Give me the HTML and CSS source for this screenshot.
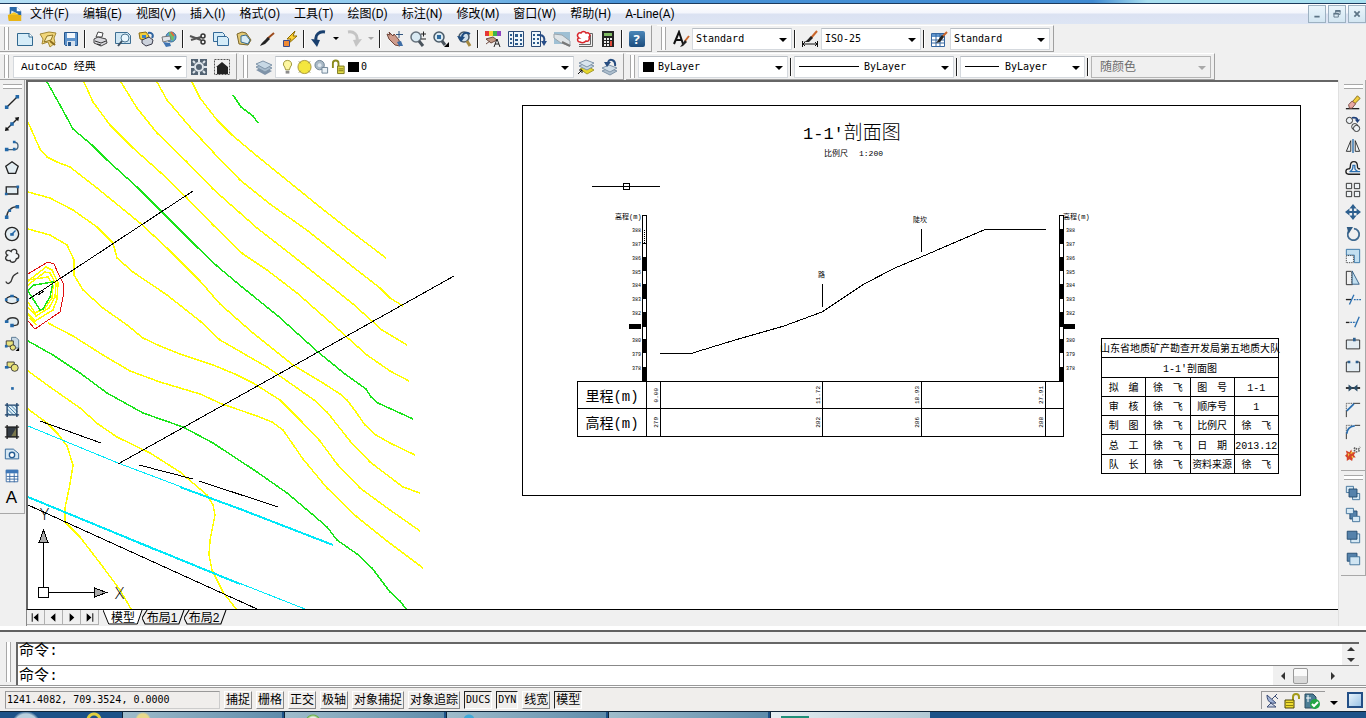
FILE: index.html
```html
<!DOCTYPE html>
<html lang="zh-CN">
<head>
  <meta charset="UTF-8">
  <meta name="viewport" content="width=device-width, initial-scale=1.0">
  <title>AutoCAD 经典</title>
  <link rel="stylesheet" href="styles.css">
</head>
<body>

  <div class="title-edge"></div>

  <header class="menubar">
    <svg class="app-icon" viewBox="0 0 18 18"><path d="M3 1h8l5 5v5H3z" fill="#2b6aa8"/><path d="M5 5l8 4-9 3z" fill="#dce9f5"/><path d="M1 10l7-3 7 4v5H2z" fill="#f3c623"/><path d="M1 10h15v7H2z" fill="#e8b416"/><path d="M11 1l5 5h-5z" fill="#fff"/></svg>
    <nav>
      <a href="#">文件(F)</a>
      <a href="#">编辑(E)</a>
      <a href="#">视图(V)</a>
      <a href="#">插入(I)</a>
      <a href="#">格式(O)</a>
      <a href="#">工具(T)</a>
      <a href="#">绘图(D)</a>
      <a href="#">标注(N)</a>
      <a href="#">修改(M)</a>
      <a href="#">窗口(W)</a>
      <a href="#">帮助(H)</a>
      <a href="#">A-Line(A)</a>
    </nav>
    <div class="window-buttons">
      <button aria-label="最小化"><svg viewBox="0 0 16 16"><path d="M5 11h6" stroke="#5d7486" stroke-width="2"/></svg></button>
      <button aria-label="还原"><svg viewBox="0 0 16 16"><path d="M6.500 7V4.500h5v4H10M4.500 7.500h5v4h-5z" fill="none" stroke="#5d7486"/><path d="M6 4.500h6M4 7.500h6" stroke="#5d7486" stroke-width="2"/></svg></button>
      <button aria-label="关闭"><svg viewBox="0 0 16 16"><path d="M5 5l6 6M11 5l-6 6" stroke="#5d7486" stroke-width="2"/></svg></button>
    </div>
  </header>

  <div class="toolbar-row">
    <div class="toolbar standard">
      <i class="grip"></i>
      <button aria-label="新建"><svg viewBox="0 0 18 18"><path d="M1.500 3.500h12l3 3v9h-15z" fill="#d5ecf8" stroke="#31688f"/><path d="M13 3v4h4" fill="#fff" stroke="#31688f"/></svg></button>
      <button aria-label="打开"><svg viewBox="0 0 18 18"><path d="M1 4l9-2 7 1-2 5 1 5-5 4-2-5-6 2 1-5z" fill="#f1d67a" stroke="#a58a35"/><path d="M5 12l3-6 6-1-2 5z" fill="#f9eebb" stroke="#8d7425"/><path d="M11 11l5 4" stroke="#8d6d1c" stroke-width="2"/></svg></button>
      <button aria-label="保存"><svg viewBox="0 0 18 18"><path d="M2.500 2.500h13v13h-12l-1-1z" fill="#5f94cc" stroke="#24558c"/><path d="M5 3h8v5H5z" fill="#f4f8fc"/><path d="M5 11h8v5H5z" fill="#d7e2ee"/><path d="M6 12h3v4H6z" fill="#24558c"/></svg></button>
      <i class="sep"></i>
      <button aria-label="打印"><svg viewBox="0 0 18 18"><path d="M5 7l2-5 5 1-1 4z" fill="#fff" stroke="#444"/><path d="M3 9l4-2 8 2 1 4-6 3-7-3z" fill="#d9d9de" stroke="#444"/><path d="M4 11l6 2 5-2M6 14l4 1" stroke="#333" fill="none"/></svg></button>
      <button aria-label="打印预览"><svg viewBox="0 0 18 18"><path d="M1.500 2.500h12l3 3v8h-15z" fill="#cfe6f3" stroke="#3d6e92"/><circle cx="11" cy="8" r="4" fill="#e9f6fd" stroke="#4d7794"/><path d="M8 11l-4 5" stroke="#3a4e60" stroke-width="2"/></svg></button>
      <button aria-label="发布"><svg viewBox="0 0 18 18"><path d="M2 3l7-1 3 4-2 5-7-2z" fill="#f3cf3a" stroke="#8c6d12"/><path d="M5 10l7-3 4 3-1 4-6 2-4-3z" fill="#ccd2dc" stroke="#3b3b4a"/><path d="M11 3c4-1 6 2 4 5" fill="none" stroke="#2f64a0" stroke-width="2"/><path d="M5 5h4v3H5z" fill="#3d7fc0"/></svg></button>
      <button aria-label="三维 DWF"><svg viewBox="0 0 18 18"><circle cx="11" cy="7" r="5" fill="#5aa7d8" stroke="#3c6a90"/><path d="M9 2c4 0 6 5 4 9-3-2-4-5-4-9z" fill="#6fbf62"/><path d="M2 7l8-1 1 4-8 2z" fill="#e1e4ea" stroke="#777"/><path d="M3 12l7 1 1 3-5 1z" fill="#3f74b2"/><path d="M11 2l3 4" stroke="#e06b3a" stroke-width="2"/></svg></button>
      <i class="sep"></i>
      <button aria-label="剪切"><svg viewBox="0 0 18 18"><path d="M1 6l11 4M2 10l10-3" stroke="#555" stroke-width="2"/><circle cx="14" cy="6" r="2" fill="none" stroke="#333" stroke-width="1.500"/><circle cx="14" cy="12" r="2" fill="none" stroke="#333" stroke-width="1.500"/></svg></button>
      <button aria-label="复制"><svg viewBox="0 0 18 18"><path d="M1.500 2.500h9l2 2v7h-11z" fill="#d5ecf8" stroke="#356a98"/><path d="M5.500 6.500h9l2 2v7h-11z" fill="#d5ecf8" stroke="#356a98"/></svg></button>
      <button aria-label="粘贴"><svg viewBox="0 0 18 18"><path d="M2 4l5-2 4 1 5 7-3 5-9-1z" fill="#e3c974" stroke="#7b6628"/><path d="M6 6l5-1 4 5-2 4-7-2z" fill="#d7ecf7" stroke="#346a92"/></svg></button>
      <button aria-label="特性匹配"><svg viewBox="0 0 18 18"><path d="M16 3l-7 6" stroke="#9c4a1c" stroke-width="2"/><path d="M10 7l2 2-5 5-5 2c1-3 4-5 8-9z" fill="#222"/></svg></button>
      <button aria-label="块编辑器"><svg viewBox="0 0 18 18"><path d="M14 1L6 9h4l-3 5 9-8h-4z" fill="#ffd334" stroke="#8e6a00"/><path d="M2.500 10.500h6v6h-6z" fill="#f08a34" stroke="#3a4a8b"/></svg></button>
      <i class="sep"></i>
      <button aria-label="放弃"><svg viewBox="0 0 18 18"><path d="M15 2C9 1 5 5 6 10" fill="none" stroke="#193f6e" stroke-width="3"/><path d="M1 9l9 1-3 7z" fill="#193f6e"/></svg></button>
      <button class="drop" aria-label="放弃列表"></button>
      <button aria-label="重做"><svg viewBox="0 0 18 18"><path d="M3 2c6-1 10 3 9 8" fill="none" stroke="#c4c4c4" stroke-width="3"/><path d="M8 10l9-1-6 8z" fill="#c4c4c4"/></svg></button>
      <button class="drop dim" aria-label="重做列表"></button>
      <i class="sep"></i>
      <button aria-label="平移"><svg viewBox="0 0 18 18"><path d="M1 4l3 1-1-3 4 4 1-2 5 6 1 6-5-1-6-6z" fill="#cf9c8c" stroke="#70463c"/><path d="M11 12l4-1 2 5h-4z" fill="#3f6ea6"/><path d="M13 1v7M10 4.500h7" stroke="#31567f"/></svg></button>
      <button aria-label="实时缩放"><svg viewBox="0 0 18 18"><circle cx="7" cy="7" r="5" fill="#d9e9f2" stroke="#65717b" stroke-width="1.500"/><path d="M10 11l4 5" stroke="#49535c" stroke-width="3"/><path d="M12 4h5M14.500 1.500v5M12 9h5" stroke="#222"/></svg></button>
      <button aria-label="窗口缩放"><svg viewBox="0 0 18 18"><circle cx="7" cy="7" r="5" fill="#d9e9f2" stroke="#4b5b68" stroke-width="1.500"/><path d="M5 5h4v4H5z" fill="#2e6b9f"/><path d="M10 11l3 4" stroke="#49535c" stroke-width="3"/><path d="M17 12v5h-5z"/></svg></button>
      <button aria-label="缩放上一个"><svg viewBox="0 0 18 18"><circle cx="9" cy="7" r="5" fill="#cfe0ec" stroke="#4b5b68" stroke-width="1.500"/><path d="M15 4C10 1 7 4 7 8" fill="none" stroke="#1f4c80" stroke-width="2"/><path d="M2 6l8 1-4 5z" fill="#1f4c80"/><path d="M12 11l3 5" stroke="#a5893f" stroke-width="3"/></svg></button>
      <i class="sep"></i>
      <button aria-label="特性"><svg viewBox="0 0 18 18"><path d="M1 1h5v5H1z" fill="#e53535"/><path d="M5 1h4v5H5z" fill="#f2d82e"/><path d="M9 1h4v5H9z" fill="#3db34a"/><path d="M13 1h4v5h-4z" fill="#8e44c0"/><path d="M2 9l7-2 4 3-6 3zM2 14l4-3" fill="#c39984" stroke="#6d493e"/><path d="M10 17l3-8 3 8M11 14h4" fill="none" stroke="#222"/></svg></button>
      <button aria-label="设计中心"><svg viewBox="0 0 18 18"><path d="M1.500 1.500h15v15h-15z" fill="#eef6fb" stroke="#2b4b77"/><path d="M6.500 2v14" stroke="#2b4b77"/><path d="M3 4h2v2H3zM3 8h2v2H3zM3 12h2v2H3zM8 4h3v3H8zM13 4h2v3h-2zM8 9h3v2H8zM13 9h2v2h-2zM8 13h3v2H8zM13 13h2v2h-2z" fill="#2b5a8c"/></svg></button>
      <button aria-label="工具选项板"><svg viewBox="0 0 18 18"><path d="M1.500 1.500h9v15h-9z" fill="#eef6fb" stroke="#2b4b77"/><path d="M3 4h2v2H3zM7 4h2v2H7zM3 8h2v2H3zM7 8h2v2H7zM3 12h2v2H3zM7 12h2v2H7z" fill="#2b5a8c"/><path d="M9 5c5 0 6 3 5 7" fill="none" stroke="#274d87" stroke-width="2"/><path d="M11 11h6l-3 5z" fill="#274d87"/></svg></button>
      <button aria-label="图纸集"><svg viewBox="0 0 18 18"><path d="M1 2h16v12H1z" fill="#9fc0d4"/><path d="M1 4l8 1 8 6v5l-9-3-7-5z" fill="#dfe4e7" stroke="#9aa4ab"/><path d="M9 12l8 4" stroke="#777" stroke-width="2"/></svg></button>
      <button aria-label="标记集"><svg viewBox="0 0 18 18"><path d="M14 3.500h2.500v13H3" fill="none" stroke="#666"/><path d="M13 5h1.500v9.500H3" fill="none" stroke="#666"/><path d="M4 12c-3 0-3-4-1-4-3-2-1-6 2-5 1-2 4-2 5 0 3-1 5 2 3 4 1 3-1 5-3 4-2 2-4 2-6 1z" fill="#fff" stroke="#d8252b" stroke-width="1.500"/></svg></button>
      <button aria-label="计算器"><svg viewBox="0 0 18 18"><path d="M3 1h12v16H3z" fill="#222"/><path d="M5 3h8v3H5z" fill="#7fba63"/><path d="M5 8h2v2H5zM8 8h2v2H8zM11 8h2v2h-2zM5 11h2v2H5zM8 11h2v2H8zM5 14h2v2H5zM8 14h2v2H8z" fill="#eee"/><path d="M11 11h2v5h-2z" fill="#e04b3a"/></svg></button>
      <i class="sep"></i>
      <button class="help" aria-label="帮助"><b>?</b></button>
    </div>
    <div class="toolbar styles">
      <i class="grip"></i>
      <button aria-label="文字样式"><svg viewBox="0 0 18 18"><path d="M2 14L7 2l4 12M4 10h6" fill="none" stroke="#111" stroke-width="2"/><path d="M17 6l-4 5" stroke="#c9652a" stroke-width="2"/><path d="M13 10l2 2-4 4-3 1z" fill="#222"/></svg></button>
      <label class="combo w-style"><select aria-label="文字样式"><option>Standard</option></select></label>
      <i class="sep"></i>
      <button aria-label="标注样式"><svg viewBox="0 0 18 18"><path d="M1.500 11v6M16.500 11v6M2 14h14M4 12l-2 2 2 2M14 12l2 2-2 2" fill="none" stroke="#111"/><path d="M16 1l-6 7" stroke="#c9652a" stroke-width="2"/><path d="M10 6l2 2-4 4H2c3 0 5-3 8-6z" fill="#222"/></svg></button>
      <label class="combo w-style"><select aria-label="标注样式"><option>ISO-25</option></select></label>
      <i class="sep"></i>
      <button aria-label="表格样式"><svg viewBox="0 0 18 18"><path d="M1.500 3.500h13v13h-13z" fill="#fff" stroke="#3566a0"/><path d="M2 4h12v3H2z" fill="#5f94cc"/><path d="M2 10h12M2 13h12M6 4v12M10 4v12" stroke="#3566a0"/><path d="M17 2l-5 5" stroke="#c9652a" stroke-width="2"/><path d="M12 5l2 2-4 5-4 1c2-2 3-5 6-8z" fill="#222"/></svg></button>
      <label class="combo w-style"><select aria-label="表格样式"><option>Standard</option></select></label>
    </div>
  </div>

  <div class="toolbar-row">
    <div class="toolbar workspaces">
      <i class="grip"></i>
      <label class="combo w-space"><select aria-label="工作空间"><option>AutoCAD 经典</option></select></label>
      <button aria-label="工作空间设置"><svg viewBox="0 0 18 18"><path d="M1 1h16v16H1z" fill="#536373"/><path d="M3 3l2 2M15 3l-2 2M3 15l2-2M15 15l-2-2M9 1v3M9 14v3M1 9h3M14 9h3" stroke="#dfe6ec" stroke-width="2"/><circle cx="9" cy="9" r="4" fill="none" stroke="#dfe6ec" stroke-width="2"/></svg></button>
      <button aria-label="我的工作空间"><svg viewBox="0 0 18 18"><path d="M1.500 1.500h15v15h-15z" fill="none" stroke="#555" stroke-dasharray="2 1"/><path d="M3 9l6-5 6 5v7H4V9z" fill="#222"/></svg></button>
    </div>
    <div class="toolbar layers">
      <i class="grip"></i>
      <button aria-label="图层特性"><svg viewBox="0 0 18 18"><path d="M1 12l7-3 9 4-7 4z" fill="#7f93a8"/><path d="M1 9l7-3 9 4-7 4z" fill="#a8bccd" stroke="#8095a9"/><path d="M1 6l7-3 9 4-7 4z" fill="#c7d8e5" stroke="#8095a9"/></svg></button>
      <div class="combo w-layer">
        <span class="overlay">
          <svg viewBox="0 0 16 16"><path d="M8 1a4 4 0 0 1 3 7l-1 3H6L5 8a4 4 0 0 1 3-7z" fill="#fdf6a0" stroke="#9b9233"/><path d="M6 12h4v3H6z" fill="#8c8c8c"/></svg>
          <svg viewBox="0 0 16 16"><circle cx="8" cy="8" r="7" fill="#f4e63e" stroke="#a8963a"/><path d="M2 2l2 2M14 2l-2 2M2 14l2-2M14 14l-2-2" stroke="#8a8a4a"/></svg>
          <svg viewBox="0 0 16 16"><circle cx="6" cy="6" r="5" fill="#a9b9c6" stroke="#6d8294"/><circle cx="6" cy="6" r="2" fill="#dfe8ef"/><path d="M8.500 8.500h6v6h-6z" fill="#e9f1f6" stroke="#6d8294"/></svg>
          <svg viewBox="0 0 16 16"><path d="M2 9V4c0-4 6-4 6 0v4" fill="none" stroke="#8a8a1d" stroke-width="2"/><path d="M7 7h7v8H7z" fill="#e1db47" stroke="#77731a"/><path d="M8 10h5M8 12h5" stroke="#77731a"/></svg>
          <i class="swatch"></i>
        </span>
        <select class="pad-layer" aria-label="图层"><option>0</option></select>
      </div>
      <button aria-label="置为当前"><svg viewBox="0 0 18 18"><path d="M3 11l7-3 7 4-7 4z" fill="#e6d72c" stroke="#a59b2c"/><path d="M2 8l7-3 8 3-7 4z" fill="#c7d8e5" stroke="#8095a9"/><path d="M2 5l7-3 8 3-7 4z" fill="#d9e5ee" stroke="#8095a9"/><path d="M1 16l4-4M2 12h3v3" fill="none" stroke="#111"/></svg></button>
      <button aria-label="上一个图层"><svg viewBox="0 0 18 18"><path d="M2 13l7-3 8 3-7 4z" fill="#aebfce" stroke="#8095a9"/><path d="M2 10l7-3 8 3-7 4z" fill="#d0dde7" stroke="#8095a9"/><path d="M15 8c1-6-5-8-7-4" fill="none" stroke="#274d80" stroke-width="2"/><path d="M4 4h7l-4 5z" fill="#274d80"/></svg></button>
    </div>
    <div class="toolbar properties">
      <i class="grip"></i>
      <div class="combo w-color">
        <span class="overlay"><i class="swatch"></i></span>
        <select class="pad-color" aria-label="颜色"><option>ByLayer</option></select>
      </div>
      <i class="sep"></i>
      <div class="combo w-ltype">
        <span class="overlay"><i class="rule long"></i></span>
        <select class="pad-ltype" aria-label="线型"><option>ByLayer</option></select>
      </div>
      <i class="sep"></i>
      <div class="combo w-lweight">
        <span class="overlay"><i class="rule"></i></span>
        <select class="pad-lweight" aria-label="线宽"><option>ByLayer</option></select>
      </div>
      <i class="sep"></i>
      <label class="combo w-plot off"><select aria-label="打印样式" disabled><option>随颜色</option></select></label>
    </div>
  </div>

  <main class="workspace">
    <aside class="dock">
      <div class="toolbox">
        <i class="grip-h"></i>
        <button aria-label="直线"><svg viewBox="0 0 18 18"><path d="M3 15L15 3" stroke="#222" stroke-width="1.500"/><path d="M1 13h4v4H1zM13 1h4v4h-4z" fill="#2368a8"/></svg></button>
        <button aria-label="构造线"><svg viewBox="0 0 18 18"><path d="M3 15L15 3" stroke="#222" stroke-width="1.500"/><path d="M1 17l1-5 4 4zM17 1l-1 5-4-4z" fill="#111"/><path d="M7 7h4v4H7z" fill="#2368a8"/></svg></button>
        <button aria-label="多段线"><svg viewBox="0 0 18 18"><path d="M3 13h9c5 0 5-8 0-8" fill="none" stroke="#44617a" stroke-width="1.500"/><path d="M1 11h4v4H1zM10 11h3v3h-3zM10 3h3v3h-3z" fill="#2368a8"/></svg></button>
        <button aria-label="正多边形"><svg viewBox="0 0 18 18"><path d="M9 2l7 5-3 8H5L2 7z" fill="#e3edf2" stroke="#222" stroke-width="1.500"/></svg></button>
        <button aria-label="矩形"><svg viewBox="0 0 18 18"><path d="M2.500 5.500h13v8h-13z" fill="#e3edf2" stroke="#222" stroke-width="1.500"/><path d="M1 12h3v3H1zM14 4h3v3h-3z" fill="#2368a8"/></svg></button>
        <button aria-label="圆弧"><svg viewBox="0 0 18 18"><path d="M3 15C3 8 8 3 15 3" fill="none" stroke="#333" stroke-width="1.500"/><path d="M1 13h4v4H1zM13 1h4v4h-4zM5 6h3v3H5z" fill="#2368a8"/></svg></button>
        <button aria-label="圆"><svg viewBox="0 0 18 18"><circle cx="9" cy="9" r="7.500" fill="#e3edf2" stroke="#222" stroke-width="1.500"/><path d="M9 9l4-4" stroke="#2368a8" stroke-width="1.500"/><path d="M7 8h4v3H7z" fill="#2368a8"/></svg></button>
        <button aria-label="修订云线"><svg viewBox="0 0 18 18"><path d="M8 4C9 0 16 1 14 6c4 1 3 6 0 6-1 5-7 5-7 2-5 1-7-3-3-6-4-2-1-8 4-4z" fill="#f2f5f7" stroke="#333" stroke-width="1.500"/></svg></button>
        <button aria-label="样条曲线"><svg viewBox="0 0 18 18"><path d="M2 13c2 4 6 2 7-3S13 5 16 3" fill="none" stroke="#333" stroke-width="1.500"/></svg></button>
        <button aria-label="椭圆"><svg viewBox="0 0 18 18"><ellipse cx="9" cy="9" rx="7" ry="4" fill="#e3edf2" stroke="#222" stroke-width="1.500"/><path d="M1 7h3v3H1zM14 7h3v3h-3zM7 3h4v3H7z" fill="#2368a8"/></svg></button>
        <button aria-label="椭圆弧"><svg viewBox="0 0 18 18"><path d="M3 8c2-5 12-5 13 0s-3 5-6 5" fill="#e3edf2" stroke="#333" stroke-width="1.500"/><path d="M1 7h4v3H1zM7 11h4v4H7z" fill="#2368a8"/></svg></button>
        <button aria-label="插入块"><svg viewBox="0 0 18 18"><path d="M8.500 1.500h5l3 3v9h-8z" fill="#c8d9e6" stroke="#51718c"/><path d="M2.500 5.500h8v6h-8z" fill="#e8e27c" stroke="#333"/><circle cx="10" cy="13" r="3" fill="#e8e27c" stroke="#333"/><path d="M1 10h3v3H1z" fill="#2368a8"/><path d="M17 13v4h-4z"/></svg></button>
        <button aria-label="创建块"><svg viewBox="0 0 18 18"><path d="M3.500 4.500h8v6h-8z" fill="#e8e27c" stroke="#333"/><circle cx="12" cy="11" r="4" fill="#e8e27c" stroke="#333"/><path d="M1 9h4v3H1z" fill="#2368a8"/></svg></button>
        <button aria-label="点"><svg viewBox="0 0 18 18"><path d="M8 8h3v3H8z" fill="#2368a8"/></svg></button>
        <button aria-label="图案填充"><svg viewBox="0 0 18 18"><path d="M3 3h12v12H3z" fill="#dcecf5"/><path d="M4 4l10 10M8 4l7 7M12 4l3 3M4 8l7 7M4 12l3 3" stroke="#34729f"/><path d="M1 3.500h16M1 14.500h16M3.500 1v16M14.500 1v16" stroke="#1c4169" stroke-width="1.500"/></svg></button>
        <button aria-label="渐变色"><svg viewBox="0 0 18 18"><path d="M3 3h12v12H3z" fill="#343c45"/><path d="M8 14l6-10v10z" fill="#7a774d"/><path d="M1 3.500h16M1 14.500h16M3.500 1v16M14.500 1v16" stroke="#222" stroke-width="1.500"/></svg></button>
        <button aria-label="面域"><svg viewBox="0 0 18 18"><path d="M1.500 3.500h9l6 5v6h-15z" fill="#d5e7f3" stroke="#255c92"/><circle cx="9" cy="10" r="3" fill="#fff" stroke="#255c92" stroke-width="1.500"/></svg></button>
        <button aria-label="表格"><svg viewBox="0 0 18 18"><path d="M2.500 2.500h13v13h-13z" fill="#fff" stroke="#3566a0"/><path d="M2 2h14v4H2z" fill="#3f78b8"/><path d="M3 9.500h13M3 12.500h13M6.500 6v10M11.500 6v10" stroke="#3566a0"/></svg></button>
        <button class="mtext" aria-label="多行文字">A</button>
      </div>
    </aside>

    <section class="drawing">
      <div class="canvas">
        <svg class="plan" viewBox="28 82 1310 527">
          <g class="yellow">
            <path d="M192 82L200 98L217 120L232 135L257 156L320 207L353 233L386 258"/>
            <path d="M157 82L167 100L190 127L213 152L240 180L270 204L308 231L353 267L380 288L390 298L403 306"/>
            <path d="M121 82L137 108L157 133L187 162L213 189L257 228L293 256L333 288L353 304L382 330L407 345"/>
            <path d="M84 82L93 102L110 125L133 148L160 172L187 198L213 225L243 254L267 270L297 293L330 322L367 355L390 371L409 381"/>
            <path d="M28 122L35 138L40 149L47 157L57 162L70 167L97 188L140 223L167 248L200 281L220 304L253 333L293 365L323 383L340 394L347 400L356 412L365 425L376 435L390 443L415 455"/>
            <path d="M28 192L50 198L73 210L97 227L113 243L117 258L133 272L167 295L200 321L220 340L267 367L297 388L314 400L327 412L350 441L370 462L403 487L420 493"/>
            <path d="M28 229L50 235L67 245L74 260L74 275L83 290L103 308L127 325L143 338L160 346L180 354L213 365L235 374L253 383L280 400L302 422L320 441L337 464L360 488L390 510L420 531"/>
            <path d="M48 323L73 336L103 355L130 371L160 382L200 394L222 404L257 416L272 422L283 430L303 459L327 488L357 517L387 541L423 568"/>
            <path d="M28 371L50 387L80 408L98 424L117 437L150 453L180 472L207 495L213 505L215 515L210 540L209 555L212 570L223 592L236 609"/>
            <path d="M28 409L47 423L58 434L67 446L73 465L70 484L65 508L65 522L80 537L100 563L120 590L131 609"/>
            <path d="M28 281L46 267L52 270L58 283L57 299L53 310L35 321L28 314M28 285L45 272L50 273L56 284L55 297L49 308L36 316L28 307M28 280L48 277L53 286L52 298L45 308L35 313L28 302M36 325L30 318"/>
          </g>
          <g class="green">
            <path d="M47 82L60 105L73 129L92 145L107 160L137 187L162 212L197 247L217 266L242 287L278 316L318 352L345 374L366 389L371 397L378 403L413 419"/>
            <path d="M233 95L241 107L253 116L258 123"/>
            <path d="M28 341L53 355L80 373L107 393L143 413L163 420L183 427L213 443L257 472L287 493L312 514L327 527L337 540L357 554L372 568L390 592L400 601L406 609"/>
            <path d="M28 290L34 285L53 282L50 297L43 309L40 310L28 291"/>
          </g>
          <path class="red" d="M28 274L48 262L54 264L59 275L63 283L63 297L60 312L35 329L28 321"/>
          <path class="cyan" d="M28 426L118 463L240 509M28 497L150 548L305 609"/>
          <path class="cyan thick" d="M28 497L130 539L240 584M180 487L240 509L333 545"/>
          <path class="ink" d="M29 299L193 191M118 464L454 276M40 421L101 443M139 465L193 479M199 481L278 507M28 505L257 609M38 295l6-4"/>

          <g class="ink">
            <path d="M38.500 587.500h10v10h-10zM43.500 587V542M49 592.500h45"/>
            <path class="arrowhead" d="M39 542.500h9L43.500 530zM94.500 588v9l12-4.500z"/>
            <path d="M592 186.500h68M623.500 183.500h6v6h-6z"/>
            <path d="M522.500 105.500h778v390h-778z"/>
            <path d="M660 353.500H691L735 340L784 326L822 312L864 284L895 268L921 257L985 229.500H1046"/>
            <path d="M822.500 284v23M921.500 229v23"/>
            <path d="M642.500 215.500h4v166h-4zM1059.500 215.500h4v166h-4z"/>
            <path d="M643 243.500h4"/>
          </g>
          <path class="hatch" d="M644.500 230v13M642.500 231v13M646.500 231v13"/>
          <g class="fill">
            <path d="M642 257h5v14h-5zM642 284h5v15h-5zM642 312h5v15h-5zM642 339h5v14h-5zM642 367h5v14h-5z"/>
            <path d="M1059 229h5v15h-5zM1059 257h5v14h-5zM1059 284h5v15h-5zM1059 312h5v15h-5zM1059 339h5v14h-5zM1059 367h5v14h-5z"/>
            <path d="M629 324h12v5h-12zM1063 324h12v5h-12z"/>
          </g>

          <text class="ucs" x="40" y="520">Y</text>
          <text class="ucs" x="115" y="599">X</text>
          <text class="heading" x="803" y="139"><tspan class="latin">1-1'</tspan>剖面图</text>
          <text class="scale" x="824" y="156">比例尺</text>
          <text class="scale" x="859" y="156">1:200</text>
          <text class="tag" x="615" y="219">高程(m)</text>
          <text class="tag" x="1063" y="219">高程(m)</text>
          <text class="tag" x="818" y="277">路</text>
          <text class="tag" x="913" y="222">陡坎</text>
          <g class="level">
            <text x="632" y="232">388</text><text x="632" y="246">387</text><text x="632" y="260">386</text><text x="632" y="274">385</text><text x="632" y="287">384</text><text x="632" y="301">383</text><text x="632" y="315">382</text><text x="632" y="342">380</text><text x="632" y="356">379</text><text x="632" y="370">378</text>
            <text x="1066" y="232">388</text><text x="1066" y="246">387</text><text x="1066" y="260">386</text><text x="1066" y="274">385</text><text x="1066" y="287">384</text><text x="1066" y="301">383</text><text x="1066" y="315">382</text><text x="1066" y="342">380</text><text x="1066" y="356">379</text><text x="1066" y="370">378</text>
          </g>
        </svg>

        <table class="stations">
          <colgroup><col class="c1"><col class="c2"><col class="c3"><col class="c4"><col class="c5"><col class="c6"></colgroup>
          <tr><th>里程(m)</th><td><span>0.00</span></td><td><span>11.72</span></td><td><span>18.93</span></td><td><span>27.91</span></td><td></td></tr>
          <tr><th>高程(m)</th><td><span>279</span></td><td><span>282</span></td><td><span>286</span></td><td><span>288</span></td><td></td></tr>
        </table>

        <table class="title-block">
          <tr><td colspan="4"><span>山东省地质矿产勘查开发局第五地质大队</span></td></tr>
          <tr class="tall"><td colspan="4">1-1'剖面图</td></tr>
          <tr><td>拟　编</td><td>徐　飞</td><td>图　号</td><td>1-1</td></tr>
          <tr><td>审　核</td><td>徐　飞</td><td>顺序号</td><td>1</td></tr>
          <tr><td>制　图</td><td>徐　飞</td><td>比例尺</td><td>徐　飞</td></tr>
          <tr class="tall"><td>总　工</td><td>徐　飞</td><td>日　期</td><td>2013.12</td></tr>
          <tr><td>队　长</td><td>徐　飞</td><td>资料来源</td><td>徐　飞</td></tr>
        </table>
      </div>

      <div class="layout-tabs">
        <button class="nav-btn" aria-label="第一个"><svg viewBox="0 0 18 14"><path d="M5 3h1v9H5zM12 3v9L7 7.500z"/></svg></button>
        <button class="nav-btn" aria-label="上一个"><svg viewBox="0 0 18 14"><path d="M11 3v9L6 7.500z"/></svg></button>
        <button class="nav-btn" aria-label="下一个"><svg viewBox="0 0 18 14"><path d="M7 3v9l5-4.500z"/></svg></button>
        <button class="nav-btn" aria-label="最后一个"><svg viewBox="0 0 18 14"><path d="M12 3h1v9h-1zM6 3v9l5-4.500z"/></svg></button>
        <button class="tab active"><svg viewBox="0 0 42 15" preserveAspectRatio="none"><path d="M0 0l6 14h30l5-14"/></svg><span>模型</span></button>
        <button class="tab"><svg viewBox="0 0 42 15" preserveAspectRatio="none"><path d="M5 0L0 8l3 6h33l5-14"/></svg><span>布局1</span></button>
        <button class="tab"><svg viewBox="0 0 42 15" preserveAspectRatio="none"><path d="M5 0L0 8l3 6h33l5-14"/></svg><span>布局2</span></button>
      </div>
    </section>

    <aside class="dock right">
      <div class="toolbox">
        <i class="grip-h"></i>
        <button aria-label="删除"><svg viewBox="0 0 18 18"><path d="M1 16.500h15" stroke="#222" stroke-width="1.500"/><path d="M8 9l6-7 3 3-6 6z" fill="#f2cf3d" stroke="#7c6312"/><path d="M4 12l4-4 4 3-4 5H5z" fill="#e9a9a2" stroke="#74463f"/></svg></button>
        <button aria-label="复制对象"><svg viewBox="0 0 18 18"><circle cx="5" cy="5" r="3.500" fill="#eef2f5" stroke="#222"/><circle cx="11" cy="12" r="3.500" fill="#eef2f5" stroke="#222"/><circle cx="13" cy="14" r="3.500" fill="#eef2f5" stroke="#222"/><path d="M8 2c4-1 6 1 6 3" fill="none" stroke="#1d3f7a" stroke-width="2"/><path d="M11 4h6l-3 4z" fill="#1d3f7a"/></svg></button>
        <button aria-label="镜像"><svg viewBox="0 0 18 18"><path d="M6.500 3v12H1.500zM11.500 3v12h5z" fill="#eef2f5" stroke="#222"/><path d="M9 1v16" stroke="#2368a8" stroke-width="1.500"/></svg></button>
        <button aria-label="偏移"><svg viewBox="0 0 18 18"><path d="M17 16H4c-4 0-4-6 0-6 2 0 2-1 2-3 0-7 8-7 8 0 0 2 0 3 3 3" fill="none" stroke="#222" stroke-width="1.500"/><path d="M17 13H5M6 12c3 0 3-3 3-6h2c0 4 0 6 3 6" fill="none" stroke="#2b6fb0" stroke-width="1.500"/></svg></button>
        <button aria-label="阵列"><svg viewBox="0 0 18 18"><path d="M1.500 1.500h6v6h-6zM10.500 1.500h6v6h-6zM1.500 10.500h6v6h-6zM10.500 10.500h6v6h-6z" fill="#eef2f5" stroke="#222"/></svg></button>
        <button aria-label="移动"><svg viewBox="0 0 18 18"><path d="M9 3v12M3 9h12" stroke="#2e608f" stroke-width="2"/><path d="M9 0l4 5H5zM9 18l4-5H5zM0 9l5-4v8zM18 9l-5-4v8z" fill="#2e608f"/></svg></button>
        <button aria-label="旋转"><svg viewBox="0 0 18 18"><path d="M10 3a6.500 6.500 0 1 1-6 3" fill="none" stroke="#3f6a90" stroke-width="2"/><path d="M2 1h7L4 9z" fill="#2e5a82"/></svg></button>
        <button aria-label="缩放"><svg viewBox="0 0 18 18"><path d="M1.500 8V1.500h15v15h-6V8z" fill="#c2dff0" stroke="#2e6fa3"/><path d="M1.500 8.500h8v8h-8z" fill="#f4f8fb" stroke="#222" stroke-dasharray="1 1"/></svg></button>
        <button aria-label="拉伸"><svg viewBox="0 0 18 18"><path d="M8 1l8 15H8z" fill="#c2dff0" stroke="#2e5a82"/><path d="M7 1.500H1.500v15h7" fill="none" stroke="#222"/><path d="M7.500 2v14" stroke="#222" stroke-dasharray="1 1"/></svg></button>
        <button aria-label="修剪"><svg viewBox="0 0 18 18"><path d="M1 8.500h6" stroke="#222" stroke-width="1.500"/><path d="M10 8.500h8" stroke="#2b6fb0" stroke-width="1.500" stroke-dasharray="2 1"/><path d="M5 14l5-11" stroke="#2b6fb0" stroke-width="1.500"/></svg></button>
        <button aria-label="延伸"><svg viewBox="0 0 18 18"><path d="M1 9.500h4" stroke="#222" stroke-width="1.500"/><path d="M6 9.500h7" stroke="#2b6fb0" stroke-width="1.500" stroke-dasharray="2 1"/><path d="M11 15l5-12" stroke="#2b6fb0" stroke-width="1.500"/></svg></button>
        <button aria-label="打断于点"><svg viewBox="0 0 18 18"><path d="M1.500 4.500h15v10h-15z" fill="#e3ecf2" stroke="#222"/><path d="M9 2h3v4H9z" fill="#2e608f"/></svg></button>
        <button aria-label="打断"><svg viewBox="0 0 18 18"><path d="M4 4.500H1.500v11h15v-11H14" fill="#e3ecf2" stroke="#222"/><path d="M3 3h3v3H3zM12 3h3v3h-3z" fill="#2e608f"/></svg></button>
        <button aria-label="合并"><svg viewBox="0 0 18 18"><path d="M1 9h16" stroke="#222" stroke-width="2"/><path d="M4 5l5 4-5 4zM14 5L9 9l5 4z" fill="#2b4c66"/></svg></button>
        <button aria-label="倒角"><svg viewBox="0 0 18 18"><path d="M1.500 10V1.500H9" fill="none" stroke="#222" stroke-dasharray="1 1"/><path d="M9 1.500h8M1.500 10v7" stroke="#222"/><path d="M2 10l8-8" stroke="#2b6fb0" stroke-width="2"/></svg></button>
        <button aria-label="圆角"><svg viewBox="0 0 18 18"><path d="M1.500 10V1.500H9" fill="none" stroke="#222" stroke-dasharray="1 1"/><path d="M11 1.500h6M1.500 10v7" stroke="#222"/><path d="M2 11c0-5 4-9 9-9" fill="none" stroke="#2b6fb0" stroke-width="2"/></svg></button>
        <button aria-label="分解"><svg viewBox="0 0 18 18"><path d="M1 5l4 2 2-3 1 3 4 0-2 3 2 3-3 0-1 4-3-2-3 2 0-4-2-2 2-2z" fill="#d5452b"/><path d="M3 8l2 1-1 3zM7 6l2 2-3 1zM7 12l2-1v3z" fill="#f7cf3c"/><path d="M10 6l4-4M12 7l5-2M10 3l2-2M15 4l2-3" stroke="#555" stroke-width="1.500" stroke-dasharray="2 1"/></svg></button>
      </div>
      <div class="toolbox">
        <i class="grip-h"></i>
        <button aria-label="前置"><svg viewBox="0 0 18 18"><path d="M1.500 1.500h8v7h-8zM8.500 9.500h8v7h-8z" fill="#d8eaf5" stroke="#3c6d96"/><path d="M4.500 4.500h9v9h-9z" fill="#5582ab" stroke="#21496e"/></svg></button>
        <button aria-label="后置"><svg viewBox="0 0 18 18"><path d="M5.500 4.500h8v9h-8z" fill="#5582ab" stroke="#21496e"/><path d="M1.500 1.500h8v6h-8zM8.500 10.500h8v6h-8z" fill="#d8eaf5" stroke="#3c6d96"/></svg></button>
        <button aria-label="置于对象之上"><svg viewBox="0 0 18 18"><path d="M6.500 5.500h10v10h-10z" fill="#d8eaf5" stroke="#3c6d96"/><path d="M2.500 2.500h11v9h-11z" fill="#5582ab" stroke="#21496e"/></svg></button>
        <button aria-label="置于对象之下"><svg viewBox="0 0 18 18"><path d="M2.500 2.500h11v9h-11z" fill="#5582ab" stroke="#21496e"/><path d="M5.500 6.500h11v9h-11z" fill="#d0e5f2" stroke="#3c6d96"/></svg></button>
      </div>
    </aside>
  </main>

  <div class="splitter"></div>

  <section class="command">
    <i class="grip"></i>
    <div class="command-lines">
      <div class="history">
        <p>命令:</p>
        <div class="v-scroll"><button aria-label="向上" class="arrow up"></button><button aria-label="向下" class="arrow down"></button></div>
      </div>
      <div class="prompt">
        <label for="cmd">命令:</label>
        <input id="cmd" type="text">
        <div class="h-scroll"><button aria-label="向左" class="arrow left"></button><button aria-label="滑块" class="thumb"></button><button aria-label="向右" class="arrow next"></button></div>
      </div>
    </div>
  </section>

  <footer class="statusbar">
    <output class="coords">1241.4082, 709.3524, 0.0000</output>
    <button>捕捉</button>
    <button>栅格</button>
    <button>正交</button>
    <button>极轴</button>
    <button>对象捕捉</button>
    <button>对象追踪</button>
    <button class="on mono">DUCS</button>
    <button class="on mono">DYN</button>
    <button>线宽</button>
    <button class="on">模型</button>
    <div class="tray">
      <svg viewBox="0 0 16 16"><path d="M3 2c0 7 4 9 9 8z" fill="#9fb2d6" stroke="#3c4d75"/><path d="M8 6l5-5M11 3l3 3M7 10l-4 4h9z" fill="#ccd4e6" stroke="#3c4d75"/></svg>
      <svg viewBox="0 0 16 16"><path d="M9 7V4c0-4 6-4 6 0v2" fill="none" stroke="#a39a1a" stroke-width="2"/><path d="M1 7h9v8H1z" fill="#f0dc30" stroke="#4d4708"/><path d="M2 9.500h7M2 12.500h7" stroke="#8b8010"/></svg>
      <svg viewBox="0 0 16 16"><path d="M1 1h8l3 3v11H1z" fill="#4b7d95" stroke="#2c4c60"/><path d="M4 2v7M2 5h5" stroke="#fff"/><circle cx="11" cy="11" r="5" fill="#23a544"/><path d="M8 11l2 2 4-4" fill="none" stroke="#fff" stroke-width="2"/></svg>
    </div>
    <button class="drop" aria-label="状态栏菜单"></button>
    <button class="clean" aria-label="全屏显示"></button>
  </footer>

  <div class="taskbar">
    <span class="start"></span>
    <span class="task"></span>
    <span class="task"></span>
    <span class="task"></span>
    <span class="task"></span>
    <span class="task current"></span>
  </div>

</body>
</html>
```

FILE: styles.css
```css
* {
  box-sizing: border-box;
}

body {
  margin: 0;
  height: 100vh;
  display: flex;
  flex-direction: column;
  overflow: hidden;
  background-color: #f0f0f0;
  color: #000;
  font-family: "Open Sans", "Noto Sans CJK SC", sans-serif;
  font-size: 12px;
  line-height: 16px;
}

button {
  display: flex;
  align-items: center;
  justify-content: center;
  margin: 0;
  padding: 0;
  border: 0;
  background: none;
  color: inherit;
  font: inherit;
}

/* title bar edge and menu */
.title-edge {
  flex: none;
  height: 4px;
  background: linear-gradient(90deg, #b6e0f5, #8cc8ee 30%, #4a94d8 45%, #3f8ad2 80%, #a9e0f0 84%);
  border-bottom: 1px solid #1d3a5c;
}

.menubar {
  flex: none;
  display: flex;
  align-items: center;
  height: 20px;
  padding-left: 7px;
  background: linear-gradient(#fff, #f4f6fc 45%, #dbe2f2 50%, #dde5f4);
}

.app-icon {
  width: 16px;
  height: 16px;
  margin-right: 7px;
}

.menubar nav {
  display: flex;
  flex: 1;
  gap: 14px;
  font-family: Roboto, "Noto Sans CJK SC", sans-serif;
}

.menubar a {
  color: #000;
  text-decoration: none;
}

.window-buttons {
  display: flex;
  gap: 2px;
}

.window-buttons button {
  width: 18px;
  height: 18px;
  border: 1px solid #9db1c1;
  background: linear-gradient(#eaf5fb, #d3e6f2);
}

.window-buttons svg {
  width: 14px;
  height: 14px;
}

/* toolbars */
.toolbar-row {
  flex: none;
  display: flex;
  height: 27px;
  margin-top: 1px;
}

.toolbar {
  display: flex;
  align-items: center;
  padding: 1px 3px 1px 4px;
  border-right: 1px solid #a0a0a0;
  border-bottom: 1px solid #a0a0a0;
  border-top: 1px solid #fff;
}

.toolbar + .toolbar {
  margin-left: 2px;
}

.grip {
  flex: none;
  width: 5px;
  height: 23px;
  margin-right: 4px;
  border: solid #a8a8a8;
  border-width: 0 1px;
  background: #fff;
}

.toolbar button {
  flex: none;
  width: 23px;
  height: 22px;
}

.toolbar svg {
  width: 18px;
  height: 18px;
}

.sep {
  flex: none;
  width: 2px;
  height: 18px;
  margin: 0 2px;
  background: linear-gradient(90deg, #222 50%, #fff 50%);
}

.toolbar .drop {
  width: 12px;
}

.drop::before,
.combo::after {
  content: "";
  border: 4px solid transparent;
  border-top-color: #000;
  border-bottom-width: 0;
}

.toolbar .drop::before {
  border-width: 3px 3px 0;
}

.drop.dim::before,
.combo.off::after {
  border-top-color: #a8a8a8;
}

.help b {
  width: 16px;
  height: 16px;
  border-radius: 2px;
  background: linear-gradient(#4a86b8, #1d4d7d);
  color: #fff;
  font-size: 13px;
  line-height: 16px;
}

.combo {
  position: relative;
  height: 22px;
  border: 1px solid #d5d9de;
  border-top-color: #b9bec4;
  background: #fff;
}

.combo::after {
  position: absolute;
  right: 4px;
  top: 9px;
  pointer-events: none;
}

.combo select {
  display: block;
  width: 100%;
  height: 20px;
  padding: 0 3px;
  border: 0;
  background: transparent;
  appearance: none;
  color: #000;
  font-family: "DejaVu Sans Mono", "Noto Sans CJK SC", monospace;
  font-size: 10px;
}

.overlay {
  position: absolute;
  left: 4px;
  top: 0;
  height: 20px;
  display: flex;
  align-items: center;
  gap: 2px;
  pointer-events: none;
}

.overlay svg {
  width: 15px;
  height: 16px;
}

.swatch {
  width: 11px;
  height: 10px;
  background: #000;
}

.rule {
  width: 34px;
  height: 1px;
  background: #000;
}

.rule.long {
  width: 60px;
}

.toolbar + .styles {
  margin-left: 5px;
}

.styles .grip,
.properties .grip {
  margin-right: 3px;
}

.w-style {
  width: 100px;
}

.w-space {
  width: 174px;
}

.combo.w-space select {
  padding-left: 7px;
  font-family: "Liberation Mono", "Noto Sans CJK SC", monospace;
  font-size: 11px;
}

.w-layer {
  width: 299px;
}

.combo .pad-layer {
  padding-left: 85px;
}

.w-color {
  width: 150px;
}

.combo .pad-color {
  padding-left: 19px;
}

.w-ltype {
  width: 160px;
}

.combo .pad-ltype {
  padding-left: 69px;
}

.w-lweight {
  width: 125px;
}

.combo .pad-lweight {
  padding-left: 44px;
}

.w-plot {
  width: 120px;
}

.combo.off {
  border-color: #b5b5b5;
  background: #f0f0f0;
}

.combo.off select {
  padding-left: 8px;
  color: #6d6d6d;
  font-size: 12px;
  opacity: 1;
}

/* drawing area with docked tool columns */
.workspace {
  flex: 1;
  display: flex;
  min-height: 0;
}

.dock {
  flex: none;
  width: 26px;
}

.dock.right {
  width: 28px;
  padding-left: 2px;
  border-left: 1px solid #e0e0e0;
}

.toolbox {
  display: flex;
  flex-direction: column;
  width: 25px;
  padding-top: 4px;
  padding-bottom: 4px;
  border-right: 1px solid #a8a8a8;
  border-bottom: 1px solid #a8a8a8;
}

.right .toolbox {
  padding-bottom: 5px;
}

.grip-h {
  height: 5px;
  margin: 0 2px 2px 3px;
  border: solid #a8a8a8;
  border-width: 1px 0;
  background: #fff;
}

.toolbox button {
  width: 23px;
  height: 22px;
}

.toolbox svg {
  width: 16px;
  height: 16px;
}

.toolbox .mtext {
  font-family: "Liberation Sans", sans-serif;
  font-size: 17px;
}

.drawing {
  flex: 1;
  min-width: 0;
  display: flex;
  flex-direction: column;
}

.canvas {
  position: relative;
  flex: 1;
  min-height: 0;
  overflow: hidden;
  background: #fff;
  border: solid #666;
  border-width: 2px 0 1px 2px;
  border-bottom-color: #000;
}

.plan {
  display: block;
  width: 1310px;
  height: 527px;
  shape-rendering: crispEdges;
}

.plan path {
  fill: none;
}

.plan .yellow path {
  stroke: #ff0;
  stroke-width: 1.5;
}

.plan .green path {
  stroke: #1be41b;
  stroke-width: 1.5;
}

.plan .red {
  stroke: #e01010;
}

.plan .cyan {
  stroke: #00e8f8;
}

.plan .cyan.thick {
  stroke-width: 2;
}

.plan .ink {
  stroke: #000;
}

.plan .arrowhead {
  fill: #aaa;
}

.plan .hatch {
  stroke: #000;
  stroke-dasharray: 1 1;
}

.plan .fill path {
  fill: #000;
}

.plan text {
  font-family: "Liberation Mono", "Noto Sans CJK SC", monospace;
}

.plan .ucs {
  font-family: "Open Sans", sans-serif;
  font-size: 17px;
  font-weight: 300;
}

.plan .heading {
  font-size: 19px;
  font-weight: 300;
}

.plan .heading .latin {
  font-size: 17px;
}

.plan .scale {
  font-size: 8px;
}

.plan .tag {
  font-size: 7px;
}

.plan .level text {
  font-size: 5px;
}

.canvas table {
  position: absolute;
  border-collapse: collapse;
  table-layout: fixed;
  font-family: "Liberation Mono", "Noto Sans CJK SC", monospace;
}

.canvas th,
.canvas td {
  padding: 0;
  border: 1px solid #000;
  font-weight: 400;
  white-space: nowrap;
}

.stations {
  left: 549px;
  top: 299px;
  width: 487px;
}

.stations tr {
  height: 27px;
}

.stations tr + tr {
  height: 28px;
}

.stations .c1 { width: 69px; }
.stations .c2 { width: 14px; }
.stations .c3 { width: 162px; }
.stations .c4 { width: 99px; }
.stations .c5 { width: 124px; }
.stations .c6 { width: 18px; }

.canvas .stations th {
  padding-top: 3px;
  font-size: 14px;
  line-height: 20px;
}

.stations td {
  font-size: 6px;
  line-height: 6px;
}

.stations span {
  display: block;
  margin-left: auto;
  width: 6px;
  writing-mode: vertical-rl;
  transform: rotate(180deg);
  text-align: center;
}

.title-block {
  left: 1073px;
  top: 256px;
  width: 178px;
  text-align: center;
  font-size: 10px;
  line-height: 15px;
}

.title-block tr {
  height: 19px;
}

.title-block .tall {
  height: 20px;
}

.canvas .title-block td {
  padding-top: 3px;
}

.title-block span {
  display: block;
  margin: 0 -2px;
}

.layout-tabs {
  flex: none;
  display: flex;
  height: 16px;
  border-left: 1px solid #888;
}

.nav-btn {
  width: 18px;
  height: 15px;
  border-right: 1px solid #b0b0b0;
  border-bottom: 1px solid #b0b0b0;
}

.nav-btn svg {
  width: 18px;
  height: 14px;
}

.tab {
  position: relative;
  width: 43px;
  height: 15px;
  margin-left: -1px;
  padding-right: 3px;
  font-family: "Liberation Sans", "Noto Sans CJK SC", sans-serif;
}

.tab.active {
  margin-left: 4px;
  padding-right: 0;
  width: 40px;
}

.tab svg {
  position: absolute;
  inset: 0;
  width: 100%;
  height: 100%;
}

.tab path {
  fill: #f0f0f0;
  stroke: #000;
}

.tab.active path {
  fill: #fff;
}

.tab span {
  position: relative;
}

/* command window */
.splitter {
  flex: none;
  height: 16px;
  background: linear-gradient(#fff 4px, #606060 4px, #606060 6px, #f0f0f0 6px);
}

.command {
  flex: none;
  display: flex;
  height: 43px;
  padding: 0 7px 0 6px;
}

.command .grip {
  height: 40px;
  margin-right: 5px;
}

.command-lines {
  flex: 1;
  border-left: 2px solid #666;
  font-family: "Liberation Mono", "Noto Sans CJK SC", monospace;
  font-size: 15px;
}

.history {
  display: flex;
  justify-content: space-between;
  height: 24px;
  border-top: 2px solid #666;
  border-bottom: 1px solid #888;
  background: #fff;
}

.history p {
  margin: 0;
  padding-left: 1px;
}

.v-scroll {
  display: flex;
  flex-direction: column;
  justify-content: space-around;
  align-items: center;
  width: 17px;
  background: #f0f0f0;
}

.prompt {
  display: flex;
  height: 19px;
  margin-right: 17px;
  background: #fff;
}

.prompt label {
  padding-left: 1px;
  line-height: 21px;
}

.prompt input {
  flex: 1;
  border: 0;
  padding: 0 4px;
  font: inherit;
  outline: 0;
}

.h-scroll {
  display: flex;
  align-items: center;
  justify-content: space-between;
  width: 69px;
  padding: 0 7px 0 8px;
  background: #f0f0f0;
}

.h-scroll .thumb {
  width: 15px;
  height: 16px;
  margin-right: 16px;
  border: 1px solid #999;
  border-radius: 2px;
  background: linear-gradient(#fafafa 50%, #d9d9d9 50%);
}

.arrow {
  border: 4px solid transparent;
}

.arrow.up {
  border-top-width: 0;
  border-bottom-color: #333;
}

.arrow.down {
  border-bottom-width: 0;
  border-top-color: #333;
}

.arrow.left {
  border-left-width: 0;
  border-right-color: #333;
}

.arrow.next {
  border-right-width: 0;
  border-left-color: #333;
}

/* status bar */
.statusbar {
  flex: none;
  display: flex;
  align-items: center;
  gap: 4px;
  height: 26px;
  padding: 4px 3px 1px 5px;
  border-top: 1px solid #999;
  background: linear-gradient(#fff 1px, #999 1px, #999 2px, #f0eeec 2px);
}

.coords {
  width: 215px;
  height: 18px;
  padding-left: 1px;
  border: 1px solid #999;
  border-right-color: #ccc;
  border-bottom-color: #ccc;
  font-family: "DejaVu Sans Mono", monospace;
  font-size: 10px;
}

.statusbar button {
  height: 18px;
  padding: 0 1px;
  border: 1px solid #fff;
  border-right-color: #888;
  border-bottom-color: #888;
}

.statusbar .on {
  border-color: #222 #fff #fff #222;
}

.statusbar .mono {
  font-family: "DejaVu Sans Mono", monospace;
  font-size: 10px;
}

.tray {
  display: flex;
  gap: 4px;
  width: 64px;
  height: 18px;
  margin-left: auto;
  padding: 1px 0 0 2px;
  border: solid #999;
  border-width: 1px 0 0 1px;
}

.tray svg {
  width: 16px;
  height: 16px;
}

.statusbar .drop {
  width: 10px;
  border: 0;
  padding-top: 6px;
}

.statusbar .clean {
  width: 16px;
  height: 16px;
  margin-left: 4px;
  border: 2px solid #234f86;
  background: linear-gradient(135deg, #e7f3fb, #9cc4e6);
}

/* top edge of the system taskbar */
.taskbar {
  flex: none;
  display: flex;
  gap: 2px;
  height: 7px;
  border-top: 1px solid #0f2438;
  background: #1d5288;
}

.start {
  width: 120px;
  background: radial-gradient(circle at 26px 14px, #b9cfdd 12px, transparent 15px), radial-gradient(circle at 94px 8px, transparent 4px, #e0cf3e 5px, #e0cf3e 7px, transparent 8px);
}

.task {
  width: 160px;
  border-left: 1px solid #0f2438;
  background: linear-gradient(90deg, #9fbccb, #5f8cab);
}

.task:nth-child(2) {
  background: radial-gradient(circle at 20px 8px, #e8d98a 6px, transparent 8px), linear-gradient(90deg, #9fbccb, #5f8cab);
}

.task:nth-child(3) {
  background: radial-gradient(circle at 28px 10px, #e6f0e4 5px, #6db04a 7px, transparent 8px), linear-gradient(90deg, #9fbccb, #5f8cab);
}

.task:nth-child(4) {
  background: radial-gradient(circle at 22px 8px, #3fa9d8 5px, transparent 6px), linear-gradient(90deg, #9fbccb, #5f8cab);
}

.task.current {
  background: linear-gradient(#1f8f78, #1f8f78) 10px 4px / 28px 4px no-repeat, linear-gradient(90deg, #e4edf1, #b2c8d4);
}
```
